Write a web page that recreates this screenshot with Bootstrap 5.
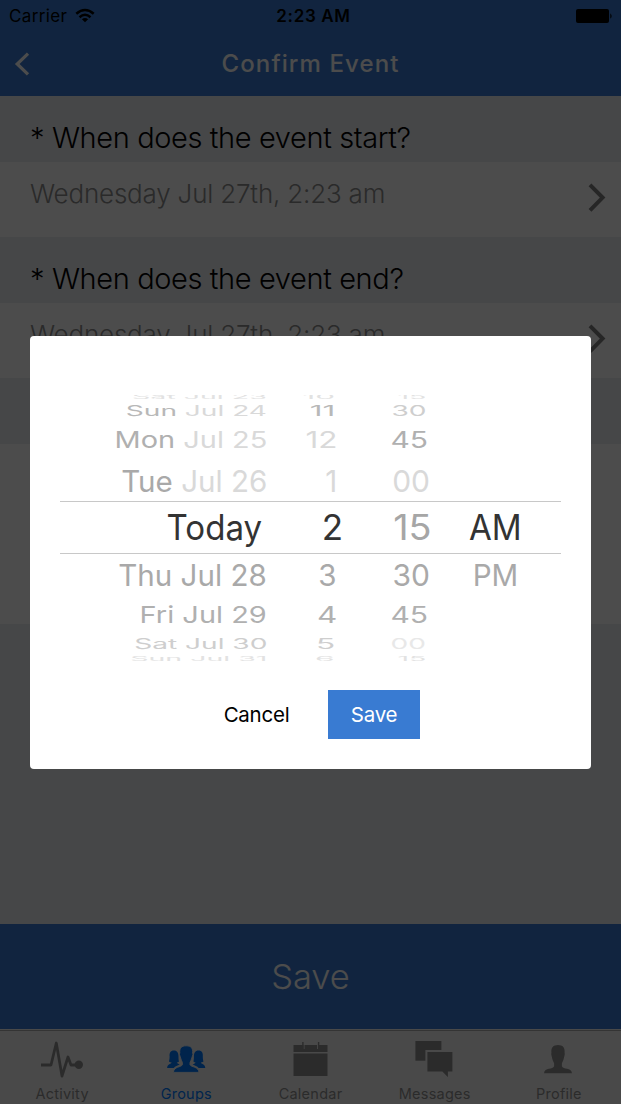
<!DOCTYPE html>
<html lang="en">
<head>
<meta charset="utf-8">
<meta name="viewport" content="width=device-width, initial-scale=1">
<title>Confirm Event</title>
<link rel="stylesheet" href="https://cdn.jsdelivr.net/npm/bootstrap@5.3.0/dist/css/bootstrap.min.css">
<style>
  :root { --brand: #397bd2; --section: #ebedf2; --muted: #929292; }
  body { font-family: Inter, "Liberation Sans", sans-serif; color: #000; height: 1104px; overflow: hidden; }
  svg { display: block; flex: none; }

  .app-head { background: var(--brand); height: 96px; }
  .status-bar { height: 32px; font-size: 17px; line-height: 32px; padding: 0 8px 0 9px; }
  .status-bar .carrier { letter-spacing: .35px; }
  .status-bar .clock { font-weight: 600; letter-spacing: .65px; padding-left: 5px; }
  .status-bar > * { flex: 1 1 0; }
  .title-bar { height: 64px; color: #fff; padding: 0 14px; }
  .title-bar h1 { font-size: 24px; font-weight: 450; letter-spacing: 1.1px; line-height: 62px; }
  .title-bar .side { width: 16px; }

  .field-label { background: var(--section); height: 66px; padding: 27px 30px 0; font-size: 29px; font-weight: 300; line-height: 30px; letter-spacing: -.38px; }
  .field-value { background: #fff; height: 75px; padding: 17px 15px 0 30px; font-size: 26px; font-weight: 300; line-height: 30px; letter-spacing: -.2px; color: #8e8e8e; }
  .field-value svg { margin-top: 4px; }
  .notes-box { background: #fff; height: 180px; }
  .filler { background: var(--section); }
  .save-bar { background: var(--brand); color: #fff; height: 105px; font-size: 34.5px; font-weight: 350; line-height: 106px; border-radius: 0; }

  .tab-strip { background: #f6f6f6; height: 75px; border-top: 1px solid #f6f6f6; box-shadow: inset 0 1px #b0b0b0; }
  .tab-strip a { color: var(--muted); font-size: 14.5px; line-height: 16px; padding-top: 10px; letter-spacing: .25px; text-decoration: none; }
  .tab-strip a svg { margin-bottom: 8px; }
  .tab-strip a.active { color: #007aff; }

  .shade { background: rgba(0, 0, 0, .7); }
  .picker-card { margin: 336px 30px 0; height: 433px; padding: 59px 30px 30px; border: 0; border-radius: 4px; background: #fff; }
  .picker-card .btn { height: 49px; font-size: 20.5px; line-height: 49px; padding: 0; border: 0; border-radius: 0; letter-spacing: -.25px; }
  .btn-dismiss { width: 111px; color: #000; }
  .btn-commit, .btn-commit:hover { width: 92px; background: #397bd2; color: #fff; }

  /* date wheel: rows shrink vertically with distance from the middle */
  .wheel { height: 266px; overflow: hidden; display: grid; grid-template-rows: 7px 18px 40px 41px 53px 42px 38px 19px 8px; margin-bottom: 29px; }
  .wheel-row { display: grid; min-height: 0; grid-template-columns: 207px 70px 93px 1fr; align-items: center; font-size: 30px; line-height: 1; color: #a9a9a9; white-space: nowrap; }
  .wheel-row > span { display: flex; justify-content: flex-end; align-items: center; height: 0; }
  .wheel-row > span > span { transform: scale(var(--sx, 1), var(--sy, 1)); transform-origin: right center; white-space: pre; }
  .wheel-row > span:last-child { justify-content: flex-start; padding-left: 42px; }
  .far { --sx: .935; --sy: .46; color: #cecece; }
  .mid { --sx: .965; --sy: .76; color: #b0b0b0; }
  .near { --sx: .985; --sy: .985; }
  .edge { --sx: .95; --sy: .2; color: #e2e2e2; }
  .edge:first-child > span { margin-top: -4px; }
  .edge:last-child > span { margin-top: 3px; }
  .near > :nth-child(3), .mid > :nth-child(3) { --sx: 1; }
  .mid > :nth-child(3) { padding-right: 2px; }
  .far > :nth-child(2), .edge > :nth-child(2) { padding-right: 2px; --sx: 1.05; }
  .far > :nth-child(3), .edge > :nth-child(3) { padding-right: 4px; }
  .mid > :nth-child(2) { --sx: 1.05; }
  .chosen { font-size: 35px; color: #333; border: solid #c8c8c8; border-width: 1px 0; grid-template-columns: 202px 81px 89px 1fr; }
  .chosen > :first-child { --sx: .945; }
  .chosen > :nth-child(3) { --sx: 1.08; }
  .chosen > span:last-child { --sx: .945; padding-left: 37px; }
  .chosen > span:last-child > span { transform-origin: left center; }
  .off { color: #d9d9d9; }
  .dim { color: #a6a6a6; }
  .deep { color: #b8b8b8; }
  .fade-out { color: #e8e8e8; }
</style>
<script defer src="https://cdn.jsdelivr.net/npm/bootstrap@5.3.0/dist/js/bootstrap.bundle.min.js"></script>
</head>
<body class="d-flex flex-column">

<header class="app-head">
  <div class="status-bar d-flex">
    <div class="d-flex align-items-center">
      <span class="carrier">Carrier</span>
      <svg class="ms-2" width="20" height="16" viewBox="0 0 20 16"><g fill="none" stroke="#000" stroke-width="2.5"><path d="M1.3 5.8Q10 -1.8 18.7 5.8"/><path d="M4.5 9.2Q10 4.4 15.5 9.2"/></g><path d="M6.9 11.3Q10 8.7 13.1 11.3L10 14.3Z"/></svg>
    </div>
    <div class="clock text-center">2:23 AM</div>
    <div class="d-flex justify-content-end align-items-center">
      <svg width="38" height="16" viewBox="0 0 38 16"><rect x="1" y="1" width="33" height="14" rx="2"/><path d="M35.3 5.2Q38 8 35.3 10.8Z"/></svg>
    </div>
  </div>
  <div class="title-bar d-flex align-items-center justify-content-between">
    <svg class="side" width="16" height="24" viewBox="0 0 16 24"><path d="M14 1.6L3.2 12L14 22.4" fill="none" stroke="#fff" stroke-width="3.2"/></svg>
    <h1 class="m-0">Confirm Event</h1>
    <span class="side"></span>
  </div>
</header>

<main class="d-flex flex-column flex-grow-1">
  <div class="field-label">* When does the event start?</div>
  <div class="field-value d-flex justify-content-between align-items-start">
    <span>Wednesday Jul 27th, 2:23 am</span>
    <svg width="18" height="30" viewBox="0 0 18 30"><path d="M2 1.8L14.6 14.6L2 27.4" fill="none" stroke="#808080" stroke-width="4"/></svg>
  </div>
  <div class="field-label">* When does the event end?</div>
  <div class="field-value d-flex justify-content-between align-items-start">
    <span>Wednesday Jul 27th, 2:23 am</span>
    <svg width="18" height="30" viewBox="0 0 18 30"><path d="M2 1.8L14.6 14.6L2 27.4" fill="none" stroke="#808080" stroke-width="4"/></svg>
  </div>
  <div class="field-label"></div>
  <div class="notes-box"></div>
  <div class="filler flex-grow-1"></div>
  <button class="save-bar btn w-100 p-0 border-0">Save</button>
</main>

<nav class="tab-strip nav nav-fill flex-nowrap">
  <a href="#" class="col d-flex flex-column align-items-center">
    <svg width="44" height="38" viewBox="0 0 44 38"><path d="M1 25H11L16.3 3L22 36L28 17L31 25H38" fill="none" stroke="currentColor" stroke-width="2.8" stroke-linejoin="round"/><circle cx="38.8" cy="24.8" r="4.2" fill="currentColor"/></svg>
    Activity</a>
  <a href="#" class="col d-flex flex-column align-items-center active">
    <svg width="44" height="38" viewBox="0 0 44 38" fill="currentColor"><path id="side-person" d="M10 10.6C6.3 10.6 5.2 13.3 5.6 16.5C5.6 19 5.2 20.5 4.9 21.6C5.8 22.3 6.7 22.5 7.6 22.5C7.4 24.2 3.4 23.6 3.1 28H9.8C11.2 26.4 13.5 25.6 15.8 24.6C15.2 24 13.3 23.8 12.8 22.5C13.6 22.5 14.3 22.3 15 21.6C14.6 20 14.5 18.5 14.5 16.5C14.5 13 13.2 10.6 10 10.6Z"/><use href="#side-person" transform="translate(44.4 0) scale(-1 1)"/><path d="M22.2 5.8C17.2 5.8 15.3 8.4 15.8 13L15.4 14.2L16.6 18C17 20 18 21.3 18.4 22.6V24.8C17 27.4 10 26.3 9.4 32.4H35C34.4 26.3 27.4 27.4 26 24.8V22.6C26.4 21.3 27.4 20 27.8 18L29 14.2L28.6 13C29.1 8.4 27.2 5.8 22.2 5.8Z" stroke="#f6f6f6" stroke-width=".9"/></svg>
    Groups</a>
  <a href="#" class="col d-flex flex-column align-items-center">
    <svg width="44" height="38" viewBox="0 0 44 38" fill="currentColor"><path d="M4.5 5H38.5V12H4.5ZM4.5 13.4H38.5V36H4.5Z"/><path d="M15 3V9M28.6 3V9" stroke="#f6f6f6" stroke-width="1"/><path d="M13.9 2V9M29.6 2V9" stroke="currentColor" stroke-width="1.4"/></svg>
    Calendar</a>
  <a href="#" class="col d-flex flex-column align-items-center">
    <svg width="44" height="38" viewBox="0 0 44 38" fill="currentColor"><path d="M2.4 1H28.4V20.7H2.4Z"/><path d="M13.4 11H40.4V32.6H35.9V39.5L28.9 32.6H13.4Z" stroke="#f6f6f6" stroke-width="2"/></svg>
    Messages</a>
  <a href="#" class="col d-flex flex-column align-items-center">
    <svg width="44" height="38" viewBox="0 0 44 38" fill="currentColor"><path d="M21 5C16.1 5 13.9 7.7 14.4 12.8L14.2 14.3L15.2 18.6C15.7 21 16.6 22 17.1 23.5V26.2C15.9 29.6 7.6 27.2 7 33.2H35C34.4 27.2 26.1 29.6 24.9 26.2V23.5C25.4 22 26.3 21 26.8 18.6L27.8 14.3L27.6 12.8C28.1 7.7 25.9 5 21 5Z"/></svg>
    Profile</a>
</nav>

<div class="shade position-fixed top-0 start-0 w-100 h-100">
  <div class="picker-card">
    <div class="wheel">
      <div class="wheel-row edge"><span><span>Sat Jul 23</span></span><span><span>10</span></span><span><span>15</span></span><span></span></div>
      <div class="wheel-row far"><span><span><span class="deep">Sun</span> <span class="off">Jul 24</span></span></span><span><span class="deep">11</span></span><span><span>30</span></span><span></span></div>
      <div class="wheel-row mid"><span><span>Mon <span class="off">Jul 25</span></span></span><span><span class="off">12</span></span><span><span>45</span></span><span></span></div>
      <div class="wheel-row near"><span><span>Tue <span class="off">Jul 26</span></span></span><span><span class="off">1</span></span><span><span class="off">00</span></span><span></span></div>
      <div class="wheel-row chosen"><span><span>Today</span></span><span><span>2</span></span><span><span class="dim">15</span></span><span><span>AM</span></span></div>
      <div class="wheel-row near"><span><span>Thu Jul 28</span></span><span><span>3</span></span><span><span>30</span></span><span><span>PM</span></span></div>
      <div class="wheel-row mid"><span><span>Fri Jul 29</span></span><span><span>4</span></span><span><span>45</span></span><span></span></div>
      <div class="wheel-row far"><span><span>Sat Jul 30</span></span><span><span>5</span></span><span><span class="fade-out">00</span></span><span></span></div>
      <div class="wheel-row edge"><span><span>Sun Jul 31</span></span><span><span>6</span></span><span><span>15</span></span><span></span></div>
    </div>
    <div class="d-flex justify-content-center gap-3">
      <button class="btn btn-dismiss">Cancel</button>
      <button class="btn btn-commit">Save</button>
    </div>
  </div>
</div>
</body>
</html>
